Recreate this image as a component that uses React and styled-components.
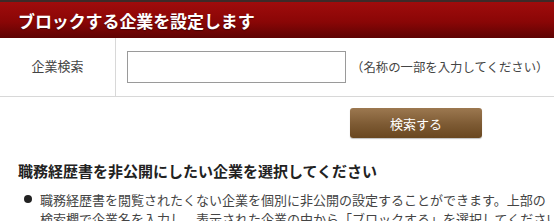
import React from "react";
import styled, { createGlobalStyle } from "styled-components";

const GlobalStyle = createGlobalStyle`
  html, body {
    margin: 0;
    padding: 0;
    background: #fff;
    overflow: hidden;
  }
  body {
    font-family: "Noto Sans CJK JP", "Noto Sans", sans-serif;
    color: #333;
  }
`;

const Page = styled.div`
  width: 832px;
`;

const Header = styled.div`
  height: 38px;
  box-sizing: border-box;
  border-top: 2px solid #3e2a28;
  background: linear-gradient(to bottom, #a00c0c, #8a0606 55%, #5e0303);
  display: flex;
  align-items: center;
  padding-left: 18px;
`;

const HeaderTitle = styled.h2`
  margin: 0;
  color: #fff;
  font-size: 17px;
  font-weight: 700;
  letter-spacing: -0.1px;
  text-shadow: 0 1px 1px rgba(0, 0, 0, 0.4);
`;

const FormRow = styled.div`
  display: flex;
  height: 58px;
  border-bottom: 1px solid #d8d8d8;
`;

const Label = styled.div`
  width: 116px;
  flex-shrink: 0;
  border-right: 1px solid #d8d8d8;
  display: flex;
  align-items: center;
  justify-content: center;
  padding-bottom: 3px;
  box-sizing: border-box;
  font-size: 13px;
  color: #444;
`;

const Field = styled.div`
  display: flex;
  align-items: center;
  gap: 5px;
  padding-left: 11px;
`;

const Input = styled.input`
  width: 219px;
  height: 32px;
  box-sizing: border-box;
  border: 1px solid #9a9a9a;
  border-radius: 0;
  outline: none;
  padding: 0 6px;
`;

const Hint = styled.span`
  font-size: 12.4px;
  color: #444;
  white-space: nowrap;
`;

const ButtonRow = styled.div`
  display: flex;
  justify-content: center;
  padding-top: 11px;
`;

const SearchButton = styled.button`
  width: 132px;
  height: 30px;
  border: none;
  border-radius: 3px;
  background: linear-gradient(to bottom, #9c7850, #7d5a33 55%, #694720);
  color: #fff;
  font-family: inherit;
  font-size: 13px;
  cursor: pointer;
  box-shadow: 0 1px 1px rgba(0, 0, 0, 0.25);
`;

const SectionTitle = styled.h3`
  margin: 22px 0 0 18px;
  font-size: 15px;
  font-weight: 700;
  color: #222;
  line-height: 22px;
`;

const List = styled.ul`
  list-style: none;
  margin: 8px 0 0;
  padding: 0 0 0 40px;
`;

const Item = styled.li`
  position: relative;
  font-size: 13px;
  line-height: 19px;
  color: #444;
  white-space: nowrap;

  &::before {
    content: "";
    position: absolute;
    left: -16px;
    top: 5px;
    width: 8px;
    height: 8px;
    border-radius: 50%;
    background: #222;
  }
`;

const App = () => {
  return (
    <Page>
      <GlobalStyle />
      <Header>
        <HeaderTitle>ブロックする企業を設定します</HeaderTitle>
      </Header>
      <FormRow>
        <Label>企業検索</Label>
        <Field>
          <Input type="text" />
          <Hint>（名称の一部を入力してください）</Hint>
        </Field>
      </FormRow>
      <ButtonRow>
        <SearchButton>検索する</SearchButton>
      </ButtonRow>
      <SectionTitle>職務経歴書を非公開にしたい企業を選択してください</SectionTitle>
      <List>
        <Item>
          職務経歴書を閲覧されたくない企業を個別に非公開の設定することができます。上部の
          <br />
          検索欄で企業名を入力し、表示された企業の中から「ブロックする」を選択してください。
        </Item>
      </List>
    </Page>
  );
};

export default App;
